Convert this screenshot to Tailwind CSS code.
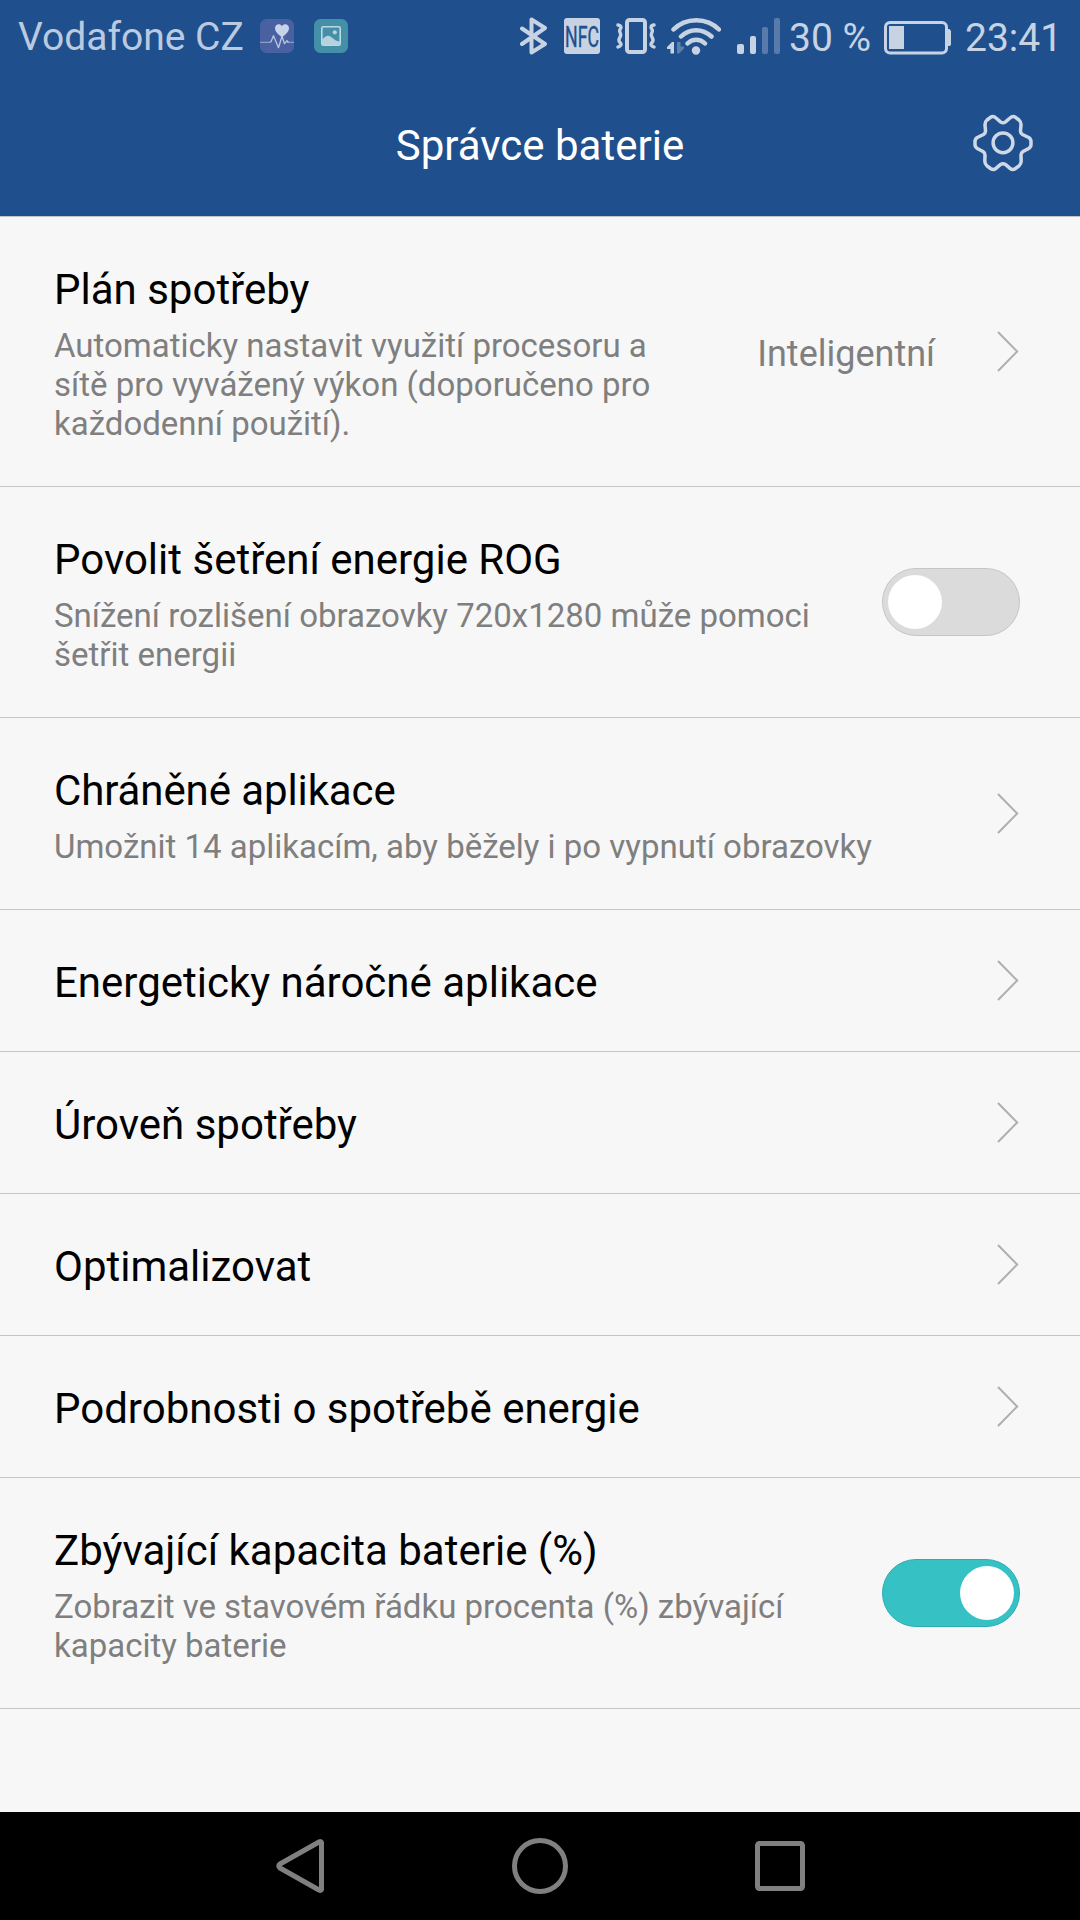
<!DOCTYPE html>
<html lang="cs">
<head>
<meta charset="utf-8">
<title>Správce baterie</title>
<script src="https://cdn.jsdelivr.net/npm/@tailwindcss/browser@4"></script>
</head>
<body class="flex h-[1920px] w-[1080px] flex-col overflow-hidden bg-[#f7f7f7] font-[Roboto,sans-serif]">
<header class="flex h-[217px] flex-none flex-col border-b border-[#c4c4c9] bg-[#1f508d]">
  <!-- Status bar -->
  <div class="flex h-[72px] items-center pl-[18px] pr-6 text-[39px] leading-[46px] text-[#c7d3e3]">
    <span class="w-[242px] whitespace-nowrap pt-0.5 text-[#bccae0]">Vodafone CZ</span>
    <svg class="mr-5 size-[34px] flex-none" viewBox="0 0 34 34" fill="none">
      <rect width="34" height="34" rx="6.5" fill="#4a61a1"/>
      <path d="M0 23.3h9.5M27 23.3h7" stroke="#8b9cc9" stroke-width="1.3"/>
      <path d="M9.500 23.500l1.500-.8 2.500-6 5 12 3.500-11.500 2.500 7.500 2.500-3 1.500 1.800" stroke="#b9c7e0" stroke-width="1.3" stroke-linejoin="round"/>
      <path d="M22 18.200C18.500 15.800 15 12.800 15 9.300c0-4 5-5.500 7-2 2-3.500 7-2 7 2 0 3.500-3.500 6.500-7 8.900z" fill="#c7d3e8"/>
    </svg>
    <svg class="size-[34px] flex-none" viewBox="0 0 34 34" fill="none">
      <rect width="34" height="34" rx="6.500" fill="#4390a8"/>
      <rect x="7.800" y="7.800" width="18.400" height="18.400" rx="1.500" stroke="#c0d8e2" stroke-width="1.600"/>
      <path d="M8 20.500c3-2.500 5-4.500 7.500-3.500 3.500 1.500 5.500 5.500 10.500 5.500V26H8z" fill="#b7d2de"/>
      <circle cx="20.800" cy="13.300" r="2.100" fill="#b7d2de"/>
    </svg>
    <div class="ml-auto flex items-center">
      <svg class="mr-4 h-[38px] w-7 flex-none" viewBox="0 0 28 38" fill="none" stroke="#c7d3e3" stroke-width="4" stroke-linecap="round" stroke-linejoin="round">
        <path d="M2 11.500L25 27 11.500 35.500V2.500L25 11 2 27"/>
      </svg>
      <svg class="mr-4 size-9 flex-none overflow-visible" viewBox="0 0 36 36">
        <rect width="36" height="36" rx="3" fill="#c7d3e3"/>
        <text x="1" y="28.500" font-family="Roboto" font-size="29" textLength="34" lengthAdjust="spacingAndGlyphs" fill="#1f508d" stroke="#1f508d" stroke-width=".4">NFC</text>
      </svg>
      <svg class="mr-[11px] h-9 w-10 flex-none" viewBox="0 0 40 36" fill="none" stroke="#c7d3e3">
        <rect x="11" y="2" width="18" height="32" rx="2.500" stroke-width="4"/>
        <path stroke-width="3.400" stroke-linecap="round" stroke-linejoin="round" d="M2 7c3.500.5 3.500 2.500 2 4.500s1.500 3.500.5 6.500-3 4-.5 6.500-.5 4-2 4.500M38 7c-3.500.5-3.500 2.500-2 4.500s-1.500 3.500-.5 6.500 3 4 .5 6.500.5 4 2 4.500"/>
      </svg>
      <svg class="mr-4 h-[38px] w-[54px] flex-none" viewBox="0 0 54 38" fill="none" stroke="#c7d3e3" stroke-linecap="round">
        <path stroke-width="4.500" d="M6.500 12.500c12-12.500 33.500-12.500 45.500 0M14 19.500c8.500-8.500 21.500-8.500 30.500 0M20.500 26.500c5-5 12.500-5 17.500 0"/>
        <circle cx="29" cy="33.500" r="4.200" fill="#c7d3e3" stroke="none"/>
        <path d="M7 25v11.500H3.500V32H0v-2l5-5z" fill="#c7d3e3" stroke="none"/>
        <path d="M10 36.500V25h3.500v4.500H17v2L12 36.500z" fill="#5c7fae" stroke="none"/>
      </svg>
      <svg class="mr-[9px] h-9 w-[43px] flex-none" viewBox="0 0 43 36">
        <g fill="#c7d3e3"><rect y="26" width="7" height="10" rx="2"/><rect x="13" y="18" width="6" height="18" rx="2"/></g>
        <g fill="#587bab"><rect x="25" y="9" width="6" height="27" rx="2"/><rect x="37" width="6" height="36" rx="2"/></g>
      </svg>
      <span class="w-[95px] whitespace-nowrap pt-1">30 %</span>
      <svg class="mt-[3px] h-[34px] w-[67px] flex-none" viewBox="0 0 67 34" fill="none">
        <rect x="1.500" y="1.500" width="61" height="30.500" rx="4.500" stroke="#c7d3e3" stroke-width="3"/>
        <path d="M5 5h15v23H5zM63 8h2.500l1.500 2v14l-1.500 1H63z" fill="#c7d3e3"/>
      </svg>
      <span class="ml-[14px] w-[91px] whitespace-nowrap pt-1">23:41</span>
    </div>
  </div>
  <!-- Title bar -->
  <div class="grid h-36 grid-cols-[1fr_auto_1fr] items-center">
    <span></span>
    <h1 class="pt-0.5 text-[42px] leading-[49px] text-white">Správce baterie</h1>
    <svg class="mb-[3px] mr-[45px] h-[60px] w-[64px] justify-self-end" viewBox="971 112.500 64 60" fill="none" stroke="#ced8e6" stroke-width="3.500" stroke-linejoin="round">
      <path d="M1000.500 121.300L996 117.500Q993.300 115 990.500 116.800L987 119.500Q984.800 121.300 985 124.500L985.500 130Q985.700 132.700 983.500 134L977.300 137Q975 138.500 975 141V144Q975 146.500 977.300 148L983 151Q985.200 152.400 985 155L984.800 160.500Q984.800 163.500 987 165.300L990.500 168Q993.300 170 996 167.800L1000.300 164.200Q1003 162.200 1005.700 164.200L1010 167.800Q1012.700 170 1015.500 168L1019 165.300Q1021.200 163.500 1021.200 160.500L1021 155Q1020.800 152.400 1023 151L1028.700 148Q1031 146.500 1031 144V141Q1031 138.500 1028.700 137L1022.500 134Q1020.300 132.700 1020.500 130L1021 124.500Q1021.200 121.300 1019 119.500L1015.500 116.800Q1012.700 115 1010 117.500L1005.500 121.300Q1003 123.300 1000.500 121.300Z"/>
      <circle cx="1003" cy="142.300" r="9.900"/>
    </svg>
  </div>
</header>

<main class="flex-1 text-black">
  <section class="flex items-center border-b border-[#c6c6c6] pl-[54px] pr-[60px]">
    <div class="flex flex-1 flex-col gap-3 pb-[43px] pt-12">
      <h2 class="text-[42px] leading-[49px]">Plán spotřeby</h2>
      <p class="text-[33px] leading-[39px] text-[#7f7f7f]">Automaticky nastavit využití procesoru a<br>sítě pro vyvážený výkon (doporučeno pro<br>každodenní použití).</p>
    </div>
    <span class="mr-[61px] pt-1 text-[36px] leading-[42px] text-[#7f7f7f]">Inteligentní</span>
    <svg class="h-[42px] w-6 flex-none" viewBox="0 0 24 42" fill="none" stroke="#afafaf" stroke-width="2"><path d="M2 1l19.200 19.500L2 40"/></svg>
  </section>
  <section class="flex items-center border-b border-[#c6c6c6] pl-[54px] pr-[60px]">
    <div class="flex flex-1 flex-col gap-3 pb-[43px] pt-12">
      <h2 class="text-[42px] leading-[49px]">Povolit šetření energie ROG</h2>
      <p class="text-[33px] leading-[39px] text-[#7f7f7f]">Snížení rozlišení obrazovky 720x1280 může pomoci<br>šetřit energii</p>
    </div>
    <div class="flex h-[68px] w-[138px] flex-none items-center rounded-full border border-[#c6c6c6] bg-[#dbdbdb] px-[5px]"><div class="size-[54px] rounded-full bg-white"></div></div>
  </section>
  <section class="flex items-center border-b border-[#c6c6c6] pl-[54px] pr-[60px]">
    <div class="flex flex-1 flex-col gap-3 pb-[43px] pt-12">
      <h2 class="text-[42px] leading-[49px] tracking-[-0.1px]">Chráněné aplikace</h2>
      <p class="text-[33px] leading-[39px] text-[#7f7f7f]">Umožnit 14 aplikacím, aby běžely i po vypnutí obrazovky</p>
    </div>
    <svg class="h-[42px] w-6 flex-none" viewBox="0 0 24 42" fill="none" stroke="#afafaf" stroke-width="2"><path d="M2 1l19.200 19.500L2 40"/></svg>
  </section>
  <section class="flex items-center border-b border-[#c6c6c6] pl-[54px] pr-[60px]">
    <h2 class="flex-1 pb-11 pt-12 text-[42px] leading-[49px]">Energeticky náročné aplikace</h2>
    <svg class="h-[42px] w-6 flex-none" viewBox="0 0 24 42" fill="none" stroke="#afafaf" stroke-width="2"><path d="M2 1l19.200 19.500L2 40"/></svg>
  </section>
  <section class="flex items-center border-b border-[#c6c6c6] pl-[54px] pr-[60px]">
    <h2 class="flex-1 pb-11 pt-12 text-[42px] leading-[49px]">Úroveň spotřeby</h2>
    <svg class="h-[42px] w-6 flex-none" viewBox="0 0 24 42" fill="none" stroke="#afafaf" stroke-width="2"><path d="M2 1l19.200 19.500L2 40"/></svg>
  </section>
  <section class="flex items-center border-b border-[#c6c6c6] pl-[54px] pr-[60px]">
    <h2 class="flex-1 pb-11 pt-12 text-[42px] leading-[49px]">Optimalizovat</h2>
    <svg class="h-[42px] w-6 flex-none" viewBox="0 0 24 42" fill="none" stroke="#afafaf" stroke-width="2"><path d="M2 1l19.200 19.500L2 40"/></svg>
  </section>
  <section class="flex items-center border-b border-[#c6c6c6] pl-[54px] pr-[60px]">
    <h2 class="flex-1 pb-11 pt-12 text-[42px] leading-[49px]">Podrobnosti o spotřebě energie</h2>
    <svg class="h-[42px] w-6 flex-none" viewBox="0 0 24 42" fill="none" stroke="#afafaf" stroke-width="2"><path d="M2 1l19.200 19.500L2 40"/></svg>
  </section>
  <section class="flex items-center border-b border-[#c6c6c6] pl-[54px] pr-[60px]">
    <div class="flex flex-1 flex-col gap-3 pb-[43px] pt-12">
      <h2 class="text-[42px] leading-[49px]">Zbývající kapacita baterie (%)</h2>
      <p class="text-[33px] leading-[39px] text-[#7f7f7f]">Zobrazit ve stavovém řádku procenta (%) zbývající<br>kapacity baterie</p>
    </div>
    <div class="flex h-[68px] w-[138px] flex-none items-center justify-end rounded-full border border-[#2eadb1] bg-[#36c1c5] px-[5px]"><div class="size-[54px] rounded-full bg-white"></div></div>
  </section>
</main>

<!-- Navigation keys -->
<nav class="flex h-[108px] flex-none justify-center bg-black">
  <div class="grid w-[720px] grid-cols-3 place-items-center">
    <svg class="h-[54px] w-12" viewBox="0 0 48 54" fill="none" stroke="#808080" stroke-width="5" stroke-linejoin="round"><path d="M45.500 3.500Q45 2 43 3L4 25Q1.500 27 4 29L43 51Q45 52 45.500 50.500Z"/></svg>
    <svg class="size-14" viewBox="0 0 56 56" fill="none" stroke="#808080" stroke-width="5"><circle cx="28" cy="28" r="25.500"/></svg>
    <svg class="size-[50px]" viewBox="0 0 50 50" fill="none" stroke="#808080" stroke-width="5"><rect x="2.500" y="2.500" width="45" height="45" rx="2"/></svg>
  </div>
</nav>
</body>
</html>
